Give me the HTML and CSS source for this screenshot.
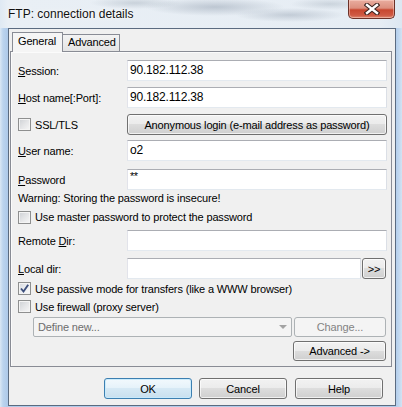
FILE: index.html
```html
<!DOCTYPE html>
<html>
<head>
<meta charset="utf-8">
<title>FTP: connection details</title>
<link rel="stylesheet" href="styles.css">
</head>
<body>
<div class="window">
  <div class="titlebar">
    <span class="title">FTP: connection details</span>
    <div class="close">
      <svg width="16" height="12" viewBox="0 0 16 12">
        <path d="M3 2 L13 10 M13 2 L3 10" stroke="#3b2320" stroke-width="4.6" stroke-linecap="square" fill="none"/>
        <path d="M3 2 L13 10 M13 2 L3 10" stroke="#ffffff" stroke-width="2.4" stroke-linecap="square" fill="none"/>
      </svg>
    </div>
  </div>
  <div class="client">
    <div class="tabs">
      <div class="tab tab-active">General</div>
      <div class="tab">Advanced</div>
    </div>
    <div class="panel">
      <div class="row r-session">
        <span class="label"><u>S</u>ession:</span>
        <div class="input">90.182.112.38</div>
      </div>
      <div class="row r-host">
        <span class="label"><u>H</u>ost name[:Port]:</span>
        <div class="input">90.182.112.38</div>
      </div>
      <div class="row r-ssl">
        <label class="check label"><span class="cb"></span>SSL/TLS</label>
        <button class="btn btn-wide">Anonymous login (e-mail address as password)</button>
      </div>
      <div class="row r-user">
        <span class="label"><u>U</u>ser name:</span>
        <div class="input">o2</div>
      </div>
      <div class="row r-pass">
        <span class="label"><u>P</u>assword</span>
        <div class="input pw">**</div>
      </div>
      <div class="warning">Warning: Storing the password is insecure!</div>
      <label class="check crow r-master"><span class="cb"></span>Use master password to protect the password</label>
      <div class="row r-remote">
        <span class="label">Remote <u>D</u>ir:</span>
        <div class="input"></div>
      </div>
      <div class="row r-local">
        <span class="label"><u>L</u>ocal dir:</span>
        <div class="input input-short"></div>
        <button class="btn btn-more">&gt;&gt;</button>
      </div>
      <label class="check crow r-passive"><span class="cb cb-on">
        <svg width="11" height="11" viewBox="0 0 11 11"><path d="M2 5.5 L4.5 8.5 L9.2 1.8" stroke="#3d4f7c" stroke-width="1.9" fill="none"/></svg>
      </span>Use passive mode for transfers (like a WWW browser)</label>
      <label class="check crow r-firewall"><span class="cb"></span>Use firewall (proxy server)</label>
      <div class="row r-define">
        <div class="select"><span>Define new...</span><span class="arrow"></span></div>
        <button class="btn btn-disabled btn-change">Change...</button>
      </div>
      <div class="row r-adv">
        <button class="btn btn-adv">Advanced -&gt;</button>
      </div>
    </div>
    <div class="footer">
      <button class="btn btn-default btn-ok">OK</button>
      <button class="btn btn-cancel">Cancel</button>
      <button class="btn btn-help">Help</button>
    </div>
  </div>
</div>
</body>
</html>
```
FILE: styles.css
```css
* { box-sizing: border-box; }
html, body { margin: 0; padding: 0; }
body {
  width: 402px;
  height: 407px;
  overflow: hidden;
  font-family: "Liberation Sans", Arial, sans-serif;
  font-size: 11px;
  letter-spacing: -0.15px;
  color: #000;
}
.window {
  width: 402px;
  height: 407px;
  display: flex;
  flex-direction: column;
  background: linear-gradient(90deg, #dbe8f5 0px, #bcd4ee 3px, #b0cbea 7px, #b0cbea 395px, #bcd4ee 398px, #d3e3f3 402px);
}
.titlebar {
  height: 28px;
  flex: none;
  display: flex;
  justify-content: space-between;
  align-items: flex-start;
  padding: 0 7px 0 8px;
  background:
    radial-gradient(ellipse 70px 9px at 215px 7px, rgba(110, 125, 145, 0.35), transparent),
    radial-gradient(ellipse 55px 7px at 290px 15px, rgba(110, 125, 145, 0.3), transparent),
    radial-gradient(ellipse 45px 6px at 135px 3px, rgba(120, 135, 150, 0.28), transparent),
    radial-gradient(ellipse 40px 6px at 330px 4px, rgba(120, 135, 150, 0.25), transparent),
    linear-gradient(90deg, #dfe9f3 0px, #e9eff5 8px, #e6edf4 380px, #dce7f2 402px);
}
.title {
  font-size: 12px;
  letter-spacing: 0;
  line-height: 14px;
  padding-top: 7px;
  color: #111;
  text-shadow: 0 0 6px rgba(255, 255, 255, 0.95), 0 0 2px rgba(255, 255, 255, 0.9);
}
.close {
  width: 47px;
  height: 19px;
  border: 1px solid #6b3128;
  border-top: none;
  border-radius: 0 0 5px 5px;
  background: linear-gradient(180deg, #e9ad9f 0%, #dc8f7e 45%, #c8472f 55%, #cf5a44 85%, #de8a72 100%);
  box-shadow: inset 0 0 0 1px rgba(255, 220, 210, 0.45);
  display: flex;
  align-items: center;
  justify-content: center;
}
.client {
  flex: 1;
  margin: 0 6px 1px 8px;
  border: 1px solid #5b6b80;
  background: #f0f0f0;
  padding: 3px 3px 6px 1px;
  display: flex;
  flex-direction: column;
}
.tabs {
  height: 19px;
  flex: none;
  display: flex;
  align-items: flex-end;
  padding-left: 2px;
}
.tab {
  height: 17px;
  width: 58px;
  margin-left: -1px;
  border: 1px solid #898c95;
  border-bottom: none;
  padding-left: 5px;
  line-height: 15px;
  background: linear-gradient(180deg, #f3f3f3, #e4e4e4);
}
.tab-active {
  position: relative;
  z-index: 2;
  width: 51px;
  height: 20px;
  margin-left: 0;
  margin-bottom: -1px;
  line-height: 17px;
  background: #f5f5f5;
}
.panel {
  height: 316px;
  flex: none;
  border: 1px solid #898c95;
  box-shadow: inset 1px 1px 0 #fbfbfb;
  background: #f0f0f0;
  padding: 8px 4px 5px 7px;
  display: flex;
  flex-direction: column;
}
.row {
  display: flex;
  align-items: center;
  height: 21px;
  flex: none;
}
.label {
  width: 109px;
  flex: none;
  white-space: nowrap;
}
u { text-decoration: underline; text-underline-offset: 1px; }
.input {
  width: 260px;
  height: 21px;
  flex: none;
  background: #fff;
  border: 1px solid;
  border-color: #abadb3 #dbdfe6 #e3e9ef #e2e3ea;
  padding: 0 2px;
  line-height: 19px;
  font-size: 12px;
  letter-spacing: -0.2px;
}
.pw { font-size: 11px; line-height: 13px; letter-spacing: -0.5px; }
.input-short { width: 234px; }
.check {
  display: flex;
  align-items: center;
  gap: 4px;
  white-space: nowrap;
}
.crow { height: 17px; flex: none; }
.cb {
  width: 13px;
  height: 13px;
  flex: none;
  border: 1px solid #8e8f8f;
  background: linear-gradient(135deg, #cdd0d4 0%, #e4e5e7 50%, #f7f7f7 100%);
  box-shadow: inset 0 0 0 1px #f4f4f4;
  display: flex;
  align-items: center;
  justify-content: center;
}
.cb-on { background: linear-gradient(135deg, #d5d8de 0%, #eceef1 50%, #fafafa 100%); }
.cb svg { display: block; }
.btn {
  font: inherit;
  letter-spacing: -0.15px;
  color: #000;
  height: 21px;
  padding: 0;
  flex: none;
  border: 1px solid #707070;
  border-radius: 3px;
  background: linear-gradient(180deg, #f2f2f2 0%, #ebebeb 49%, #dddddd 50%, #cfcfcf 100%);
  box-shadow: inset 0 0 0 1px rgba(255, 255, 255, 0.7);
  display: flex;
  align-items: center;
  justify-content: center;
}
.btn-wide { width: 260px; }
.btn-more { width: 24px; margin-left: 1px; }
.btn-disabled {
  border-color: #adb2b5;
  background: #f4f4f4;
  box-shadow: none;
  color: #838383;
}
.btn-change { width: 92px; height: 20px; margin-left: 2px; }
.btn-adv { width: 93px; height: 20px; margin-left: auto; margin-right: 1px; }
.btn-default {
  border-color: #3c7fb1;
  background: linear-gradient(180deg, #f2f9fd 0%, #e5f2fa 49%, #d6e9f5 50%, #c8dfee 100%);
  box-shadow: inset 0 0 0 1px rgba(200, 234, 252, 0.9);
}
.select {
  width: 259px;
  height: 20px;
  margin-left: 15px;
  flex: none;
  border: 1px solid #adb2b5;
  border-radius: 2px;
  background: #f4f4f4;
  color: #6d6d6d;
  padding: 0 4px 0 4px;
  display: flex;
  align-items: center;
  justify-content: space-between;
}
.arrow {
  width: 0;
  height: 0;
  border-left: 4px solid transparent;
  border-right: 4px solid transparent;
  border-top: 4px solid #a3a3a3;
  margin-right: 0;
}
.warning { height: 14px; line-height: 14px; margin-top: 1px; flex: none; }
.r-host, .r-ssl { margin-top: 6px; }
.r-user { margin-top: 5px; }
.r-pass { margin-top: 8px; }
.r-master { margin-top: 4px; height: 16px; }
.r-remote { margin-top: 5px; }
.r-local { margin-top: 7px; }
.r-passive, .r-firewall { margin-top: 1px; }
.r-define { margin-top: 2px; height: 20px; }
.r-adv { margin-top: 4px; height: 20px; }
.footer {
  display: flex;
  margin-top: 11px;
  height: 21px;
  flex: none;
}
.footer .btn { width: 88px; }
.btn-ok { margin-left: 94px; }
.btn-cancel { margin-left: 7px; }
.btn-help { margin-left: 8px; }
```
